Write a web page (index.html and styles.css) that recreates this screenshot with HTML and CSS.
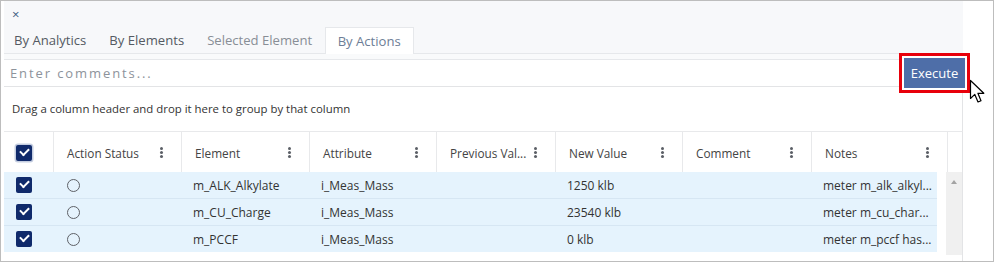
FILE: index.html
```html
<!DOCTYPE html>
<html>
<head>
	<title>Actions</title>
	<link rel="stylesheet" href="styles.css">
</head>
<body>
	<div class="frame">
		<div class="panel">
			<div class="tabbar">
				<div class="close">&times;</div>
				<div class="tabs">
					<div class="tab">By Analytics</div>
					<div class="tab">By Elements</div>
					<div class="tab muted">Selected Element</div>
					<div class="tab active">By Actions</div>
				</div>
			</div>
			<div class="strip"></div>
			<div class="comment-row">
				<input class="comment" type="text" placeholder="Enter comments...">
			</div>
			<div class="group-panel">Drag a column header and drop it here to group by that column</div>

			<div class="grid">
				<div class="head">
					<div class="hcell check-cell"><span class="cb cb-focus"></span></div>
					<div class="hcell">Action Status<span class="kebab"></span></div>
					<div class="hcell">Element<span class="kebab"></span></div>
					<div class="hcell">Attribute<span class="kebab"></span></div>
					<div class="hcell">Previous Val...<span class="kebab"></span></div>
					<div class="hcell">New Value<span class="kebab"></span></div>
					<div class="hcell">Comment<span class="kebab"></span></div>
					<div class="hcell">Notes<span class="kebab"></span></div>
					<div class="hcell last"></div>
				</div>
				<div class="body">
					<div class="rows">
						<div class="row">
							<div class="cell check-cell"><span class="cb"></span></div>
							<div class="cell status"><span class="radio"></span></div>
							<div class="cell">m_ALK_Alkylate</div>
							<div class="cell">i_Meas_Mass</div>
							<div class="cell"></div>
							<div class="cell">1250 klb</div>
							<div class="cell"></div>
							<div class="cell">meter m_alk_alkyl...</div>
						</div>
						<div class="row">
							<div class="cell check-cell"><span class="cb"></span></div>
							<div class="cell status"><span class="radio"></span></div>
							<div class="cell">m_CU_Charge</div>
							<div class="cell">i_Meas_Mass</div>
							<div class="cell"></div>
							<div class="cell">23540 klb</div>
							<div class="cell"></div>
							<div class="cell">meter m_cu_char...</div>
						</div>
						<div class="row">
							<div class="cell check-cell"><span class="cb"></span></div>
							<div class="cell status"><span class="radio"></span></div>
							<div class="cell">m_PCCF</div>
							<div class="cell">i_Meas_Mass</div>
							<div class="cell"></div>
							<div class="cell">0 klb</div>
							<div class="cell"></div>
							<div class="cell">meter m_pccf has...</div>
						</div>
					</div>
					<div class="scrollbar"><span class="arrow-up"></span></div>
				</div>
			</div>
		</div>

		<!-- highlighted button with pointer -->
		<div class="highlight">
			<button class="execute">Execute</button>
		</div>
		<svg class="pointer" width="17" height="25" viewBox="0 0 17 25">
			<path d="M1.5 1.5 L1.5 19.5 L5.8 15.4 L9 23 L12 21.7 L8.9 14.3 L14.8 14.3 Z" fill="#fff" stroke="#000" stroke-width="1.2" stroke-linejoin="round"/>
		</svg>
	</div>
</body>
</html>
```

FILE: styles.css
```css
* {
	box-sizing: border-box;
}

body {
	margin: 0;
	background: #fff;
	font-family: 'Open Sans', 'Noto Sans', Arial, sans-serif;
	font-size: 12px;
	color: #333;
}

.frame {
	position: relative;
	width: 994px;
	height: 262px;
	border: 1px solid #bdbdbd;
	padding: 0 30px 0 3px;
	overflow: hidden;
}

.panel {
	display: flex;
	flex-direction: column;
	height: 100%;
}

/* Tabs */
.tabbar {
	background: #f7f8fa;
	height: 53px;
	border-bottom: 1px solid #e6e8eb;
	display: flex;
	flex-direction: column;
}

.close {
	font-size: 13px;
	line-height: 13px;
	color: #3d5a80;
	padding: 7px 0 0 8px;
	height: 27px;
}

.tabs {
	display: flex;
	align-items: flex-end;
	height: 26px;
}

.tab {
	padding: 0 11.5px;
	height: 26px;
	line-height: 27px;
	font-size: 13.1px;
	color: #545a62;
}

.tab:first-child {
	padding-left: 11px;
	margin-left: -1px;
}

.tab.muted {
	color: #888e96;
}

.tab.active {
	background: #fff;
	border: 1px solid #e6e8eb;
	border-bottom: none;
	color: #6d7d96;
	height: 27px;
	padding: 0 12px;
	margin-bottom: -1px;
	margin-left: 1px;
}

.strip {
	height: 6px;
	background: #f9fafb;
	border-bottom: 1px solid #e6e8eb;
}

/* Comment box */
.comment-row {
	height: 27px;
	border-bottom: 1px solid #e3e4e6;
	border-right: 1px solid #e3e4e6;
	display: flex;
	align-items: center;
}

.comment {
	border: none;
	outline: none;
	background: transparent;
	width: 100%;
	padding: 0 0 0 6px;
	font-family: inherit;
	font-size: 13px;
	letter-spacing: 1.9px;
	color: #333;
}

.comment::placeholder {
	color: #8d939b;
}

.group-panel {
	height: 44px;
	line-height: 44px;
	padding-left: 8px;
	font-size: 11.4px;
	color: #333;
	border-right: 1px solid #e3e4e6;
}

/* Grid */
.grid {
	flex: 1;
	border-top: 1px solid #e8e9eb;
	border-right: 1px solid #e3e4e6;
}

.head {
	display: grid;
	grid-template-columns: 50px 128px 128px 127px 119px 127px 129px 136px 15px;
	height: 40px;
}

.hcell {
	position: relative;
	display: flex;
	align-items: center;
	padding: 1px 0 0 13px;
	border-right: 1px solid #e8e9eb;
	font-size: 11.8px;
	color: #444;
}

.hcell.last {
	border-right: none;
}

.kebab {
	position: absolute;
	right: 18px;
	top: 15px;
	width: 3px;
	height: 3px;
	border-radius: 50%;
	background: #5b5f66;
	box-shadow: 0 4px 0 #5b5f66, 0 8px 0 #5b5f66;
}

.check-cell {
	padding-left: 12px;
}

.cb {
	display: inline-block;
	width: 16px;
	height: 16px;
	border-radius: 2px;
	background: #102a6b;
	position: relative;
}

.cb::after {
	content: "";
	position: absolute;
	left: 4px;
	top: 3px;
	width: 7px;
	height: 4px;
	border-left: 2px solid #fff;
	border-bottom: 2px solid #fff;
	transform: rotate(-45deg);
}

.cb-focus {
	box-shadow: 0 0 0 1.5px #c4cde0;
}

.body {
	display: flex;
	height: 83px;
}

.rows {
	width: 933px;
}

.row {
	display: grid;
	grid-template-columns: 50px 128px 128px 127px 119px 127px 129px 125px;
	height: 27px;
	background: #e5f3fd;
	border-bottom: 1px solid #d6e6f3;
}

.row:last-child {
	height: 26px;
	border-bottom: none;
}

.cell {
	display: flex;
	align-items: center;
	padding-left: 11px;
	font-size: 12px;
	color: #333;
	white-space: nowrap;
	overflow: hidden;
}

.cell.check-cell {
	padding-left: 12px;
}

.cell.status {
	padding-left: 13px;
}

.radio {
	width: 13px;
	height: 13px;
	border: 1.3px solid #5e6167;
	border-radius: 50%;
}

.scrollbar {
	margin-left: 9px;
	width: 17px;
	background: #f0f0f0;
	position: relative;
}

.arrow-up {
	position: absolute;
	left: 5px;
	top: 8px;
	border-left: 3.5px solid transparent;
	border-right: 3.5px solid transparent;
	border-bottom: 4px solid #a3a3a3;
}

/* Highlighted execute button */
.highlight {
	position: absolute;
	left: 898px;
	top: 52px;
	width: 71px;
	height: 40px;
	border: 3px solid #e8000b;
	padding: 2px;
	background: #fff;
}

.execute {
	width: 100%;
	height: 100%;
	border: none;
	background: #4e6ea8;
	color: #fff;
	font-family: inherit;
	font-size: 13px;
	padding: 0;
}

.pointer {
	position: absolute;
	left: 968px;
	top: 78px;
}
```
